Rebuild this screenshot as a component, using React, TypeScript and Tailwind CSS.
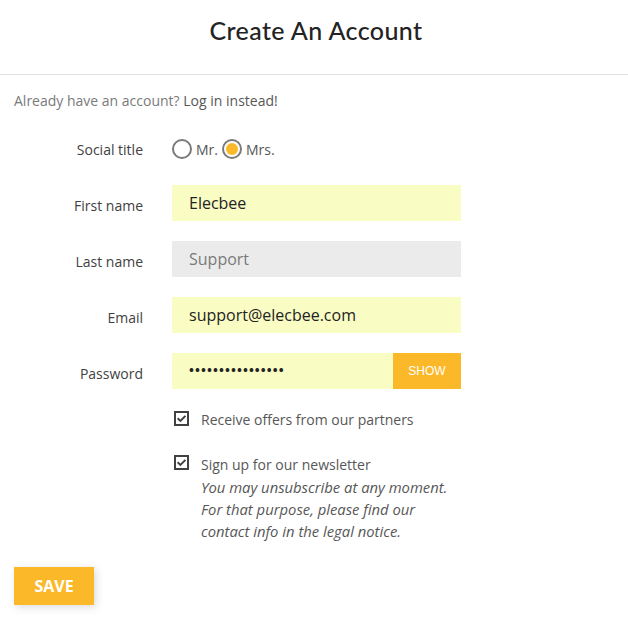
import React from "react";

const labelCls =
  "w-[129px] shrink-0 text-right text-[14px] text-[#414141]";

function Row({ label, children, className = "", labelPad = "" }: { label: string; children: React.ReactNode; className?: string; labelPad?: string }) {
  return (
    <div className={`flex items-center gap-[29px] ${className}`}>
      <div className={`${labelCls} ${labelPad}`}>{label}</div>
      {children}
    </div>
  );
}

function Checkbox() {
  return (
    <span className="flex h-[15px] w-[15px] shrink-0 items-center justify-center border-2 border-[#414141]">
      <svg viewBox="0 0 10 10" className="h-[11px] w-[11px]">
        <path d="M1.5 4.8 L4 7.2 L8.6 2.6" fill="none" stroke="#414141" strokeWidth="1.8" />
      </svg>
    </span>
  );
}

export default function App() {
  return (
    <div className="min-h-[619px] w-[628px] bg-white text-[#414141]" style={{ fontFamily: '"Open Sans", sans-serif' }}>
      <header className="flex h-[75px] justify-center border-b border-[#e1e1e1] pt-[15px]">
        <h1 className="pl-[4px] text-[25px] font-medium leading-[30px] tracking-[0.4px] text-[#232323]" style={{ fontFamily: 'Lato, sans-serif' }}>
          Create An Account
        </h1>
      </header>

      <div className="px-[14px] pt-[16px]">
        <p className="text-[14px] leading-[20px] text-[#7a7a7a]">
          Already have an account? <span className="text-[#575757]">Log in instead!</span>
        </p>

        <Row label="Social title" className="mt-[20px] h-[36px]">
          <div className="flex items-center text-[14px] text-[#575757]">
            <span className="mr-[4px] h-[20px] w-[20px] rounded-full border-2 border-[#7a7a7a] bg-white" />
            <span className="mr-[4px]">Mr.</span>
            <span className="mr-[4px] flex h-[20px] w-[20px] items-center justify-center rounded-full border-2 border-[#7a7a7a] bg-white">
              <span className="h-[12px] w-[12px] rounded-full bg-[#fbb829]" />
            </span>
            <span>Mrs.</span>
          </div>
        </Row>

        <Row label="First name" className="mt-[18px]" labelPad="pt-[4px]">
          <div className="flex h-[36px] w-[289px] items-center bg-[#fafdc3] px-[17px] text-[16px] text-[#232323]">Elecbee</div>
        </Row>
        <Row label="Last name" className="mt-[20px]" labelPad="pt-[4px]">
          <div className="flex h-[36px] w-[289px] items-center bg-[#ebebeb] px-[17px] text-[16px] text-[#7a7a7a]">Support</div>
        </Row>
        <Row label="Email" className="mt-[20px]" labelPad="pt-[4px]">
          <div className="flex h-[36px] w-[289px] items-center bg-[#fafdc3] px-[17px] text-[16px] text-[#232323]">support@elecbee.com</div>
        </Row>
        <Row label="Password" className="mt-[20px]" labelPad="pt-[4px]">
          <div className="flex h-[36px] w-[289px]">
            <div className="flex flex-1 items-center bg-[#fafdc3] px-[17px] text-[13px] font-bold tracking-[1.1px] text-[#232323]">
              ••••••••••••••••
            </div>
            <div className="flex w-[68px] items-center justify-center bg-[#fbb829] text-[12px] text-white" style={{ fontFamily: '"Liberation Sans", sans-serif' }}>
              SHOW
            </div>
          </div>
        </Row>

        <div className="ml-[160px] mt-[20px] flex items-start gap-[12px]">
          <span className="pt-[2px]"><Checkbox /></span>
          <span className="text-[14px] leading-[22px] text-[#575757]">Receive offers from our partners</span>
        </div>

        <div className="ml-[160px] mt-[23px] flex items-start gap-[12px]">
          <span className="pt-[1px]"><Checkbox /></span>
          <div className="text-[14px] leading-[22px] text-[#575757]">
            <div>Sign up for our newsletter</div>
            <div className="text-[14.8px] italic">
              You may unsubscribe at any moment.
              <br />
              For that purpose, please find our
              <br />
              contact info in the legal notice.
            </div>
          </div>
        </div>

        <button className="mt-[25px] flex h-[38px] w-[80px] items-center justify-center bg-[#fbb829] text-[16px] font-bold text-white shadow-[2px_2px_8px_0_rgba(0,0,0,0.15)]">
          SAVE
        </button>
      </div>
    </div>
  );
}
